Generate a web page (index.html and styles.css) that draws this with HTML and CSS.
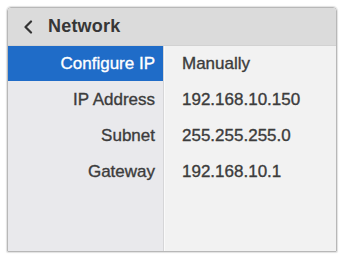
FILE: index.html
```html
<!DOCTYPE html>
<html>
<head>
<meta charset="utf-8">
<link rel="stylesheet" href="styles.css">
</head>
<body>
<div class="panel">
  <div class="header">
    <svg class="back" width="10" height="14" viewBox="0 0 10 14"><polyline points="8,1.5 2.5,7 8,12.5" fill="none" stroke="#333" stroke-width="2.2" stroke-linecap="round" stroke-linejoin="round"/></svg>
    <span class="title">Network</span>
  </div>
  <div class="content">
    <div class="labels">
      <div class="cell selected">Configure IP</div>
      <div class="cell">IP Address</div>
      <div class="cell">Subnet</div>
      <div class="cell">Gateway</div>
    </div>
    <div class="values">
      <div class="cell">Manually</div>
      <div class="cell">192.168.10.150</div>
      <div class="cell">255.255.255.0</div>
      <div class="cell">192.168.10.1</div>
    </div>
  </div>
</div>
</body>
</html>
```

FILE: styles.css
```css
html, body {
  margin: 0;
  padding: 0;
  background: #ffffff;
}
body {
  padding: 7px 6px 4px 7px;
  font-family: "Liberation Sans", Arial, sans-serif;
}
.panel {
  width: 328px;
  height: 243px;
  border: 1px solid #b8b8b8;
  border-radius: 4px 4px 1px 1px;
  display: flex;
  flex-direction: column;
  overflow: hidden;
  box-shadow: 0 0 1px 1px #e2e2e2;
}
.header {
  height: 37px;
  background: #dbdbdb;
  display: flex;
  align-items: center;
  padding-left: 15px;
  gap: 15px;
  flex-shrink: 0;
  border-bottom: 1px solid #d2d2d2;
}
.back {
  margin-top: 1px;
}
.title {
  font-size: 18px;
  font-weight: bold;
  color: #363636;
  letter-spacing: 0.2px;
}
.content {
  flex: 1;
  display: flex;
}
.labels {
  width: 155px;
  background: #e9e9ec;
  border-right: 1px solid #d6d6d8;
  box-shadow: 1px 0 0 #fafafa;
}
.values {
  flex: 1;
  background: #f2f2f2;
  padding-left: 17px;
  margin-left: 1px;
}
.cell {
  height: 36px;
  display: flex;
  align-items: center;
  font-size: 17px;
  color: #3c3c3c;
  -webkit-text-stroke: 0.35px #3c3c3c;
}
.labels .cell {
  justify-content: flex-end;
  padding-right: 8px;
}
.labels .cell.selected {
  background: #1f6cc8;
  color: #ffffff;
  -webkit-text-stroke: 0.35px #ffffff;
  height: 35px;
  margin-bottom: 1px;
}
```
